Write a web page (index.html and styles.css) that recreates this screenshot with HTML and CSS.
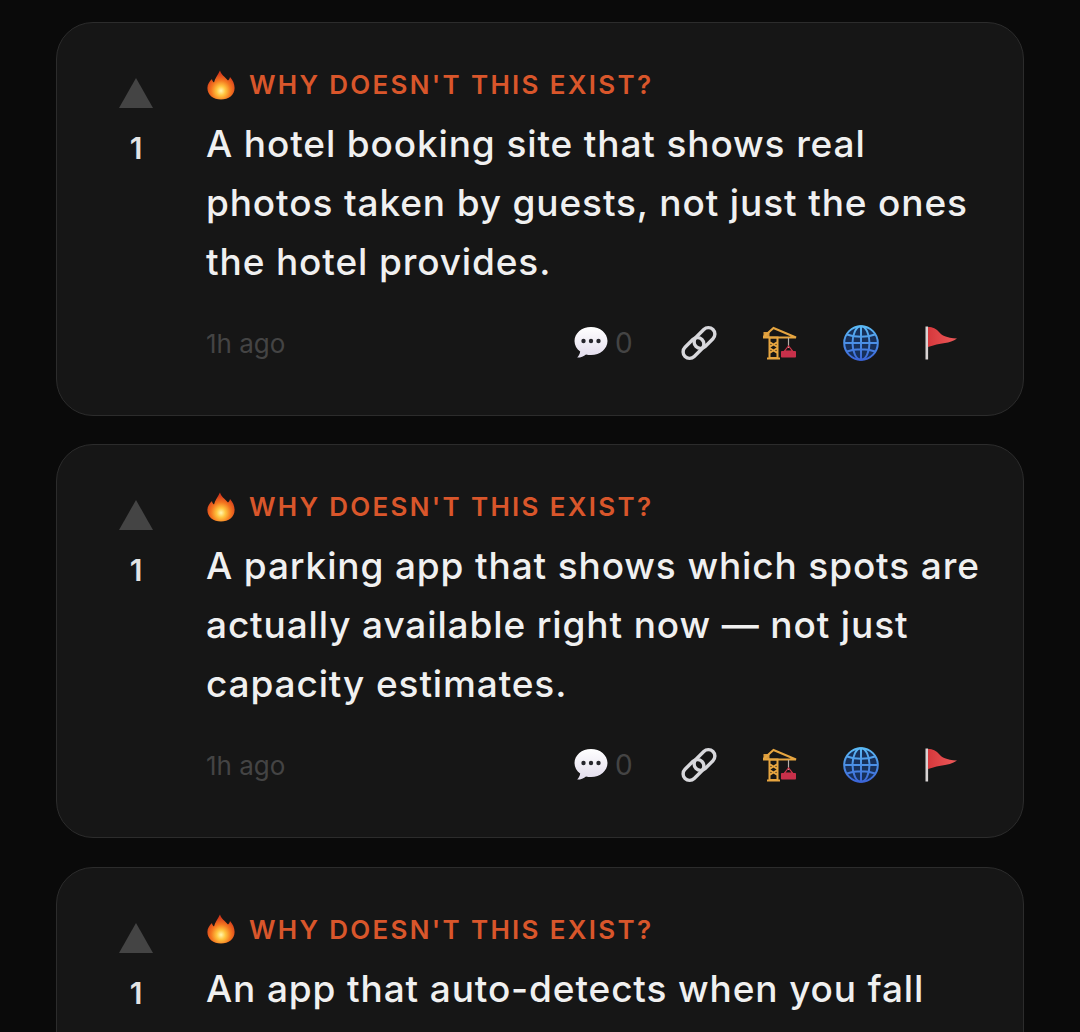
FILE: index.html
```html
<!DOCTYPE html>
<html lang="en">
<head>
    <meta charset="UTF-8">
    <meta name="viewport" content="width=device-width, initial-scale=1.0">
    <title>Why doesn't this exist?</title>
    <link rel="stylesheet" href="styles.css">
</head>
<body>

    <!-- icon set, used by every card -->
    <svg class="sprites" aria-hidden="true">
        <defs>
            <radialGradient id="fireGrad" cx="50%" cy="70%" r="58%">
                <stop offset="0" stop-color="#fff6b0"/>
                <stop offset="0.28" stop-color="#ffc53f"/>
                <stop offset="0.62" stop-color="#f4761f"/>
                <stop offset="1" stop-color="#d63c1c"/>
            </radialGradient>
            <linearGradient id="bubbleGrad" x1="0" y1="0" x2="0" y2="1">
                <stop offset="0" stop-color="#ffffff"/>
                <stop offset="1" stop-color="#e2dcec"/>
            </linearGradient>
            <linearGradient id="globeGrad" gradientUnits="userSpaceOnUse" x1="0" y1="0" x2="0" y2="36">
                <stop offset="0" stop-color="#5cbcf6"/>
                <stop offset="1" stop-color="#3a62d6"/>
            </linearGradient>
            <linearGradient id="flagGrad" x1="0" y1="0" x2="1" y2="0">
                <stop offset="0" stop-color="#d6383c"/>
                <stop offset="1" stop-color="#ee5a5a"/>
            </linearGradient>
        </defs>
        <symbol id="i-fire" viewBox="0 0 30 30">
            <path fill="url(#fireGrad)" d="M14 0.500C15 4.500 19 7 22 10.500c1-0.800 1.800-2 2-3.500 2.800 3 4.600 6.800 4.600 11 0 7-6 11.500-13.600 11.500S1.400 25 1.400 18c0-3.800 2.200-6.800 4.600-9 0.100 1.500 0.800 2.800 2 3.500C8.800 8.500 12.200 4.500 14 0.500z"/>
        </symbol>
        <symbol id="i-bubble" viewBox="0 0 34 34">
            <path fill="url(#bubbleGrad)" d="M17 1C7.800 1 0.500 7.200 0.500 15c0 4.300 2.200 8 5.700 10.600-0.300 2.300-1.500 4.500-3 6 3.300 0.100 6.500-1.200 8.800-3.200 1.600 0.400 3.300 0.600 5 0.600 9.200 0 16.500-6.200 16.500-14S26.200 1 17 1z"/>
            <circle cx="9.500" cy="15" r="2.200" fill="#26262c"/>
            <circle cx="17" cy="15" r="2.200" fill="#26262c"/>
            <circle cx="24.500" cy="15" r="2.200" fill="#26262c"/>
        </symbol>
        <symbol id="i-link" viewBox="0 0 36 36">
            <g fill="none" stroke="#d8d8dc" stroke-width="3.400">
                <rect x="17" y="1" width="13" height="24" rx="6.500" transform="rotate(45 23.500 13)"/>
                <rect x="6" y="11" width="13" height="24" rx="6.500" transform="rotate(45 12.500 23)"/>
            </g>
        </symbol>
        <symbol id="i-crane" viewBox="0 0 36 36">
            <rect x="1.500" y="7" width="6" height="6" fill="#d99a3c"/>
            <g fill="none" stroke="#e6a540" stroke-width="2">
                <path d="M2 11.500L11.500 3 34 12.500H2z"/>
                <path d="M7.500 12.500h8V33h-8zM7.500 17l8 5M15.500 17l-8 5M7.500 23l8 5M15.500 23l-8 5"/>
                <path d="M5 33.500h13"/>
            </g>
            <path d="M26.500 13v10" stroke="#b8b0a8" stroke-width="1.200"/>
            <path d="M26.500 21l-4 5h8z" fill="none" stroke="#d0344a" stroke-width="1.200"/>
            <rect x="19" y="26" width="15" height="6.500" rx="0.800" fill="#c8304a"/>
        </symbol>
        <symbol id="i-globe" viewBox="0 0 36 36">
            <circle cx="18" cy="18" r="16.800" fill="#17305a" stroke="url(#globeGrad)" stroke-width="2"/>
            <g fill="none" stroke="url(#globeGrad)" stroke-width="2">
                <ellipse cx="18" cy="18" rx="8.500" ry="16.800"/>
                <path d="M18 1v34M1 18h34M4 9.500c8 3 20 3 28 0M4 26.500c8-3 20-3 28 0"/>
            </g>
        </symbol>
        <symbol id="i-flag" viewBox="0 0 36 36">
            <rect x="1.500" y="1.500" width="2.600" height="33" fill="#d8d4d4"/>
            <path fill="url(#flagGrad)" d="M4 2c5 0 8 1.500 11 5 3 3.500 7 5.800 18 6.500-3.500 2.500-8 4-12 4.500-6 0.800-11 2-17 4z"/>
        </symbol>
    </svg>

    <main class="feed">

        <article class="card">
            <div class="vote">
                <div class="vote-arrow"></div>
                <div class="vote-count">1</div>
            </div>
            <div class="content">
                <div class="tag">
                    <svg class="tag-icon"><use href="#i-fire"/></svg>
                    <span>WHY DOESN'T THIS EXIST?</span>
                </div>
                <p class="idea">A hotel booking site that shows real photos taken by guests, not just the ones the hotel provides.</p>
                <div class="meta">
                    <span class="time">1h ago</span>
                    <div class="actions">
                        <div class="comments">
                            <svg class="bubble"><use href="#i-bubble"/></svg>
                            <span class="comment-count">0</span>
                        </div>
                        <svg class="action"><use href="#i-link"/></svg>
                        <svg class="action"><use href="#i-crane"/></svg>
                        <svg class="action"><use href="#i-globe"/></svg>
                        <svg class="action"><use href="#i-flag"/></svg>
                    </div>
                </div>
            </div>
        </article>

        <article class="card">
            <div class="vote">
                <div class="vote-arrow"></div>
                <div class="vote-count">1</div>
            </div>
            <div class="content">
                <div class="tag">
                    <svg class="tag-icon"><use href="#i-fire"/></svg>
                    <span>WHY DOESN'T THIS EXIST?</span>
                </div>
                <p class="idea">A parking app that shows which spots are actually available right now — not just capacity estimates.</p>
                <div class="meta">
                    <span class="time">1h ago</span>
                    <div class="actions">
                        <div class="comments">
                            <svg class="bubble"><use href="#i-bubble"/></svg>
                            <span class="comment-count">0</span>
                        </div>
                        <svg class="action"><use href="#i-link"/></svg>
                        <svg class="action"><use href="#i-crane"/></svg>
                        <svg class="action"><use href="#i-globe"/></svg>
                        <svg class="action"><use href="#i-flag"/></svg>
                    </div>
                </div>
            </div>
        </article>

        <article class="card">
            <div class="vote">
                <div class="vote-arrow"></div>
                <div class="vote-count">1</div>
            </div>
            <div class="content">
                <div class="tag">
                    <svg class="tag-icon"><use href="#i-fire"/></svg>
                    <span>WHY DOESN'T THIS EXIST?</span>
                </div>
                <p class="idea">An app that auto-detects when you fall</p>
            </div>
        </article>

    </main>

</body>
</html>
```

FILE: styles.css
```css
html,
body {
    height: 100%;
    overflow: hidden;
}

body {
    margin: 0;
    padding: 0;
    background-color: #0a0a0a;
    font-family: "Inter", "Liberation Sans", sans-serif;
}

.sprites {
    position: absolute;
    width: 0;
    height: 0;
}

.feed {
    display: flex;
    flex-direction: column;
    gap: 28.4px;
    padding: 22px 56px 0;
}

.card {
    display: flex;
    gap: 46px;
    padding: 47px 37px 52px 55px;
    background-color: #161616;
    border: 1px solid #2c2c2c;
    border-radius: 37px;
}

.vote {
    display: flex;
    flex-direction: column;
    align-items: center;
    flex: 0 0 48px;
    padding-top: 8px;
}

.vote-arrow {
    width: 0;
    height: 0;
    border-left: 17.5px solid transparent;
    border-right: 17.5px solid transparent;
    border-bottom: 30px solid #444444;
}

.vote-count {
    margin-top: 22px;
    font-size: 30px;
    line-height: 36px;
    font-weight: 600;
    color: #e4e4e4;
}

.content {
    flex: 1;
    min-width: 0;
}

.tag {
    display: flex;
    align-items: center;
    gap: 13px;
    height: 29px;
    font-size: 26px;
    font-weight: 600;
    letter-spacing: 2.3px;
    color: #d9562b;
}

.tag-icon {
    flex: none;
    width: 30px;
    height: 30px;
}

.idea {
    margin: 15px 0 32px;
    font-size: 37px;
    line-height: 59px;
    font-weight: 500;
    letter-spacing: 0.87px;
    color: #f0f0f0;
}

.meta {
    display: flex;
    align-items: center;
    justify-content: space-between;
    height: 40px;
    padding-right: 26px;
}

.time {
    font-size: 26px;
    color: #444444;
}

.actions {
    display: flex;
    align-items: center;
    gap: 45px;
}

.comments {
    display: flex;
    align-items: center;
    gap: 7px;
    font-size: 28px;
    color: #444444;
}

.comment-count {
    width: 21px;
}

.bubble {
    width: 34px;
    height: 34px;
}

.action {
    width: 36px;
    height: 36px;
}
```
